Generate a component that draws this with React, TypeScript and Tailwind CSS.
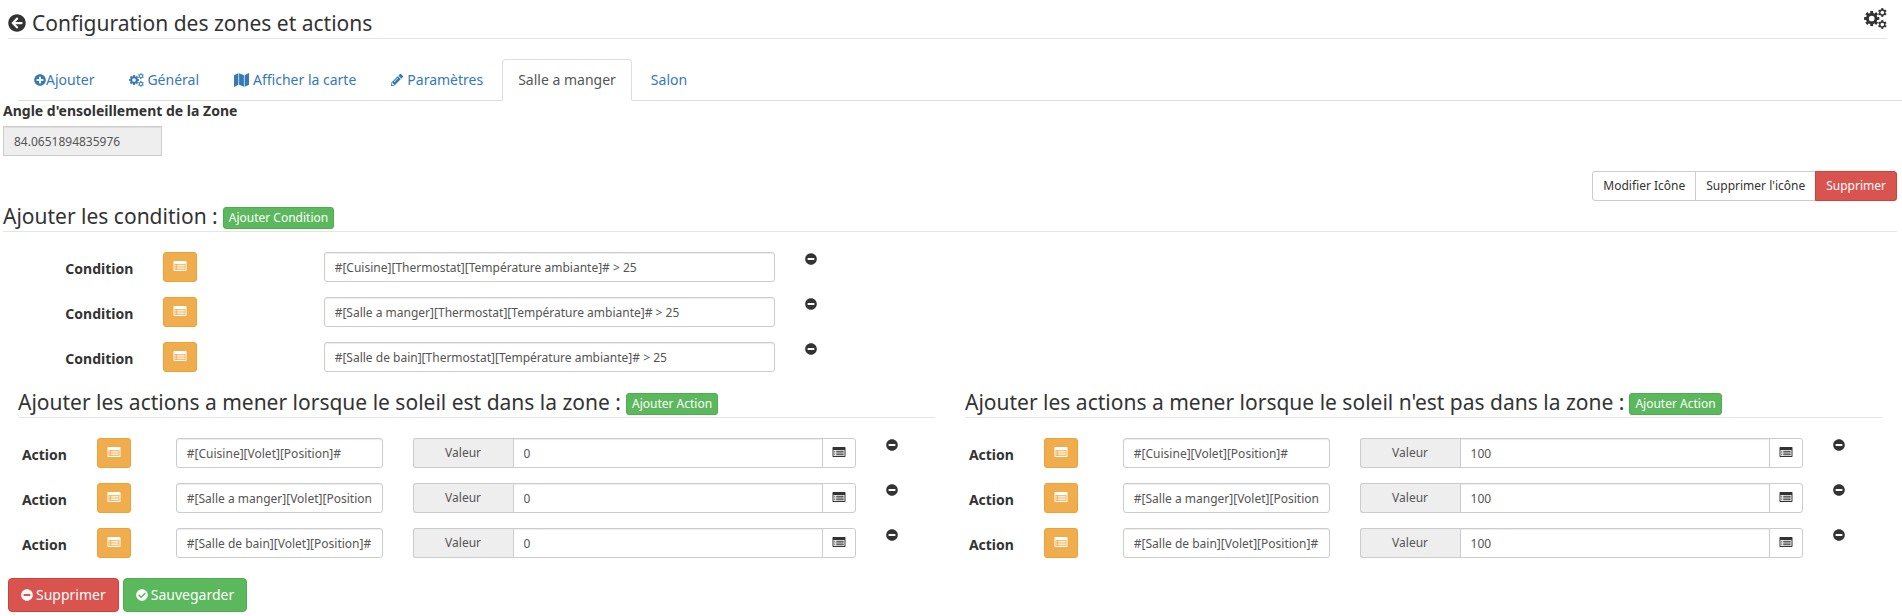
import React from "react";
import {
  FaArrowCircleLeft,
  FaCheckCircle,
  FaMinusCircle,
  FaPencilAlt,
  FaPlusCircle,
} from "react-icons/fa";

const field =
  "h-[30px] w-full min-w-0 border border-[#ccc] px-[10px] py-[5px] text-[12px] leading-[18px] text-[#555] shadow-[inset_0_1px_1px_rgba(0,0,0,0.075)]";
const smallButton = "h-[30px] border px-[10px] text-[12px] leading-[18px]";
const greenButton =
  "h-[22px] rounded-[3px] border border-[#4cae4c] bg-[#5cb85c] px-[5px] text-[12px] leading-[18px] text-white";
const legend =
  "mb-5 flex h-[31px] items-center border-b border-[#e5e5e5] text-[21px] leading-[30px]";

function ListIcon() {
  return (
    <svg viewBox="0 0 14 12" className="h-[12px] w-[14px]" fill="currentColor" aria-hidden="true">
      <path
        fillRule="evenodd"
        d="M1.2 1h11.6q.7 0 .7.7v8.6q0 .7-.7.7H1.2q-.7 0-.7-.7V1.7q0-.7.7-.7zM1.5 4v6h11V4z"
      />
      <path d="M2.300 4.700h1v1h-1zM4.200 4.700h7.500v1H4.200zM2.300 6.500h1v1h-1zM4.200 6.500h7.500v1H4.200zM2.300 8.300h1v1h-1zM4.200 8.300h7.500v1H4.200z" />
    </svg>
  );
}

function Gear({ x, y, ring, ringWidth, tip, toothWidth, teeth }: {
  x: number;
  y: number;
  ring: number;
  ringWidth: number;
  tip: number;
  toothWidth: number;
  teeth: number;
}) {
  return (
    <g transform={`translate(${x} ${y})`} stroke="currentColor" fill="none">
      <circle r={ring} strokeWidth={ringWidth} />
      {Array.from({ length: teeth }, (_, i) => (
        <path key={i} d={`M0 ${-ring}V${-tip}`} strokeWidth={toothWidth} transform={`rotate(${(i * 360) / teeth})`} />
      ))}
    </g>
  );
}

function CogsIcon({ className }: { className: string }) {
  return (
    <svg viewBox="0 0 23 21" className={className} aria-hidden="true">
      <Gear x={7.7} y={10.5} ring={4.3} ringWidth={2.9} tip={7.600} toothWidth={2.900} teeth={8} />
      <Gear x={18.300} y={4.500} ring={2.500} ringWidth={1.400} tip={4.400} toothWidth={2} teeth={6} />
      <Gear x={18.300} y={16.500} ring={2.500} ringWidth={1.400} tip={4.400} toothWidth={2} teeth={6} />
    </svg>
  );
}

function MapIcon({ className }: { className: string }) {
  return (
    <svg viewBox="0 0 15 14" className={className} fill="currentColor" aria-hidden="true">
      <path d="M4.400.2v11.600L.7 13.800q-.7.200-.7-.5V2.500q0-.4.4-.6zM5.100.2l4.800 2v11.600l-4.800-2zM14.300.2q.7-.3.700.5v10.800q0 .4-.4.6l-4 1.700V2.200z" />
    </svg>
  );
}

function PickButton() {
  return (
    <button
      type="button"
      aria-label="Choisir une commande"
      className="flex h-[30px] w-[34px] items-center justify-center rounded-[3px] border border-[#eea236] bg-[#f0ad4e] pb-[2px] text-white"
    >
      <ListIcon />
    </button>
  );
}

function RemoveButton() {
  return (
    <button type="button" aria-label="Retirer la ligne" className="mt-px block h-3 w-3">
      <FaMinusCircle className="h-3 w-3" />
    </button>
  );
}

const tabs: { label: string; icon?: React.ReactNode; active?: boolean }[] = [
  { label: "Ajouter", icon: <FaPlusCircle className="h-3 w-3" /> },
  { label: "Général", icon: <CogsIcon className="mr-[3px] h-[14px] w-[15px]" /> },
  { label: "Afficher la carte", icon: <MapIcon className="mr-1 h-[14px] w-[15px]" /> },
  { label: "Paramètres", icon: <FaPencilAlt className="mr-1 h-3 w-3" /> },
  { label: "Salle a manger", active: true },
  { label: "Salon" },
];

const conditions = [
  "#[Cuisine][Thermostat][Température ambiante]# > 25",
  "#[Salle a manger][Thermostat][Température ambiante]# > 25",
  "#[Salle de bain][Thermostat][Température ambiante]# > 25",
];

const commands = [
  "#[Cuisine][Volet][Position]#",
  "#[Salle a manger][Volet][Position]#",
  "#[Salle de bain][Volet][Position]#",
];

function ConditionRow({ id, value }: { id: string; value: string }) {
  return (
    <div className="-mx-[15px] mb-[15px] grid grid-cols-12">
      <label htmlFor={id} className="px-[15px] pt-[7px] text-right font-bold">
        Condition
      </label>
      <div className="px-[15px]">
        <PickButton />
      </div>
      <div className="col-span-3 px-[15px]">
        <input id={id} type="text" defaultValue={value} className={`${field} rounded-[3px] bg-white`} />
      </div>
      <div className="px-[15px]">
        <RemoveButton />
      </div>
    </div>
  );
}

function ActionRow({ id, command, value }: { id: string; command: string; value: string }) {
  return (
    <div className="-mx-[15px] mb-[15px] grid grid-cols-12">
      <label htmlFor={id} className="flex justify-end px-[15px] pt-[7px] font-bold">
        Action
      </label>
      <div className="px-[15px]">
        <PickButton />
      </div>
      <div className="col-span-3 px-[15px]">
        <input id={id} type="text" defaultValue={command} className={`${field} rounded-[3px] bg-white`} />
      </div>
      <div className="col-span-6 flex px-[15px]">
        <label
          htmlFor={`${id}-valeur`}
          className="h-[30px] w-[100px] shrink-0 rounded-l-[3px] border border-r-0 border-[#ccc] bg-[#eee] pt-[5px] text-center text-[12px] leading-[18px] text-[#555]"
        >
          Valeur
        </label>
        <input id={`${id}-valeur`} type="text" defaultValue={value} className={`${field} bg-white`} />
        <button
          type="button"
          aria-label="Choisir une valeur"
          className="-ml-px flex h-[30px] w-[34px] shrink-0 items-center justify-center rounded-r-[3px] border border-[#ccc] bg-white pb-[2px] text-[#333]"
        >
          <ListIcon />
        </button>
      </div>
      <div className="px-[15px]">
        <RemoveButton />
      </div>
    </div>
  );
}

function ActionSection({ id, title, value }: { id: string; title: string; value: string }) {
  return (
    <section className="px-[15px]">
      <div className={legend}>
        <h2>{title}</h2>
        <button type="button" className={`${greenButton} ml-[5px] mt-[3px]`}>
          Ajouter Action
        </button>
      </div>
      {commands.map((command, i) => (
        <ActionRow key={command} id={`${id}-${i}`} command={command} value={value} />
      ))}
    </section>
  );
}

export default function App() {
  return (
    <div
      className="min-h-screen overflow-x-clip bg-white pt-2 text-[14px] leading-5 text-[#333]"
      style={{ fontFamily: '"Noto Sans", sans-serif' }}
    >
      <header className="mb-5 ml-2 mr-[15px] flex h-[31px] items-center border-b border-[#e5e5e5]">
        <a href="#retour" aria-label="Retour">
          <FaArrowCircleLeft className="h-[18px] w-[18px]" />
        </a>
        <h1 className="ml-[6px] text-[21px] leading-[30px]">Configuration des zones et actions</h1>
        <a href="#configuration" aria-label="Configuration" className="mb-[10px] ml-auto">
          <CogsIcon className="h-[21px] w-[23px]" />
        </a>
      </header>

      <nav className="ml-[18px] flex h-[42px] gap-[3px] border-b border-[#ddd]">
        {tabs.map((tab) => (
          <a
            key={tab.label}
            href={`#${tab.label}`}
            className={
              tab.active
                ? "flex h-[42px] items-center rounded-t-[4px] border border-b-white border-[#ddd] bg-white px-[15px] text-[#555]"
                : "flex h-[42px] items-center border border-transparent px-[15px] text-[#337ab7]"
            }
          >
            {tab.icon}
            {tab.label}
          </a>
        ))}
      </nav>

      <main className="ml-[3px] mr-[5px]">
        <label htmlFor="angle" className="mb-[5px] block font-bold">
          Angle d'ensoleillement de la Zone
        </label>
        <div className="w-[159px]">
          <input id="angle" type="text" readOnly defaultValue="84.0651894835976" className={`${field} block bg-[#eee]`} />
        </div>

        <div className="mt-[15px] flex justify-end">
          <button type="button" className={`${smallButton} rounded-l-[3px] border-[#ccc] bg-white`}>
            Modifier Icône
          </button>
          <button type="button" className={`${smallButton} -ml-px border-[#ccc] bg-white`}>
            Supprimer l'icône
          </button>
          <button
            type="button"
            className={`${smallButton} -ml-px rounded-r-[3px] border-[#d43f3a] bg-[#d9534f] text-white`}
          >
            Supprimer
          </button>
        </div>

        <section>
          <div className={legend}>
            <h2>Ajouter les condition :</h2>
            <button type="button" className={`${greenButton} ml-[5px] mt-[3px]`}>
              Ajouter Condition
            </button>
          </div>
          {conditions.map((value, i) => (
            <ConditionRow key={value} id={`condition-${i}`} value={value} />
          ))}
        </section>

        <div className="grid grid-cols-2">
          <ActionSection id="dans" title="Ajouter les actions a mener lorsque le soleil est dans la zone :" value="0" />
          <ActionSection
            id="hors"
            title="Ajouter les actions a mener lorsque le soleil n'est pas dans la zone :"
            value="100"
          />
        </div>
      </main>

      <footer className="ml-2 mt-[5px] flex gap-1">
        <button
          type="button"
          className="flex h-[34px] items-center gap-[3px] rounded-[4px] border border-[#d43f3a] bg-[#d9534f] px-3 text-white"
        >
          <FaMinusCircle className="h-3 w-3" />
          Supprimer
        </button>
        <button
          type="button"
          className="flex h-[34px] items-center gap-[3px] rounded-[4px] border border-[#4cae4c] bg-[#5cb85c] px-3 text-white"
        >
          <FaCheckCircle className="h-3 w-3" />
          Sauvegarder
        </button>
      </footer>
    </div>
  );
}
